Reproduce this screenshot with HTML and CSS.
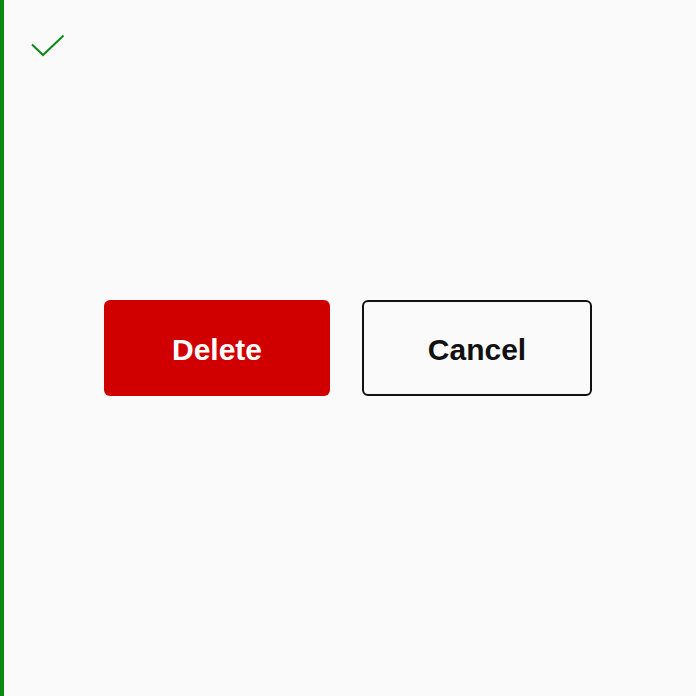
FILE: index.html
```html
<!DOCTYPE html>
<html>
<head>
<meta charset="utf-8">
<link rel="stylesheet" href="styles.css">
</head>
<body>
<div class="page">
  <svg class="check" width="40" height="30" viewBox="0 0 40 30">
    <path d="M2 9.5 L13 20 L33.5 0.5" fill="none" stroke="#0b8a1b" stroke-width="2"/>
  </svg>
  <div class="actions">
    <button class="btn btn-delete">Delete</button>
    <button class="btn btn-cancel">Cancel</button>
  </div>
</div>
</body>
</html>
```
FILE: styles.css
```css
html, body {
  margin: 0;
  padding: 0;
  background: #fafafa;
}
.page {
  position: relative;
  width: 696px;
  height: 696px;
  box-sizing: border-box;
  border-left: 4px solid #0a8a12;
  display: flex;
  align-items: center;
  justify-content: center;
}
.check {
  position: absolute;
  left: 26px;
  top: 35px;
}
.actions {
  display: flex;
  gap: 32px;
  margin-left: -4px;
}
.btn {
  height: 96px;
  box-sizing: border-box;
  font-family: "Liberation Sans", Arial, sans-serif;
  font-weight: 700;
  font-size: 30px;
  border-radius: 6px;
  padding: 4px 0 0 0;
  cursor: pointer;
}
.btn-delete {
  width: 226px;
  background: #d10000;
  color: #ffffff;
  border: none;
}
.btn-cancel {
  width: 230px;
  background: #fafafa;
  color: #111111;
  border: 2px solid #111111;
}
```
